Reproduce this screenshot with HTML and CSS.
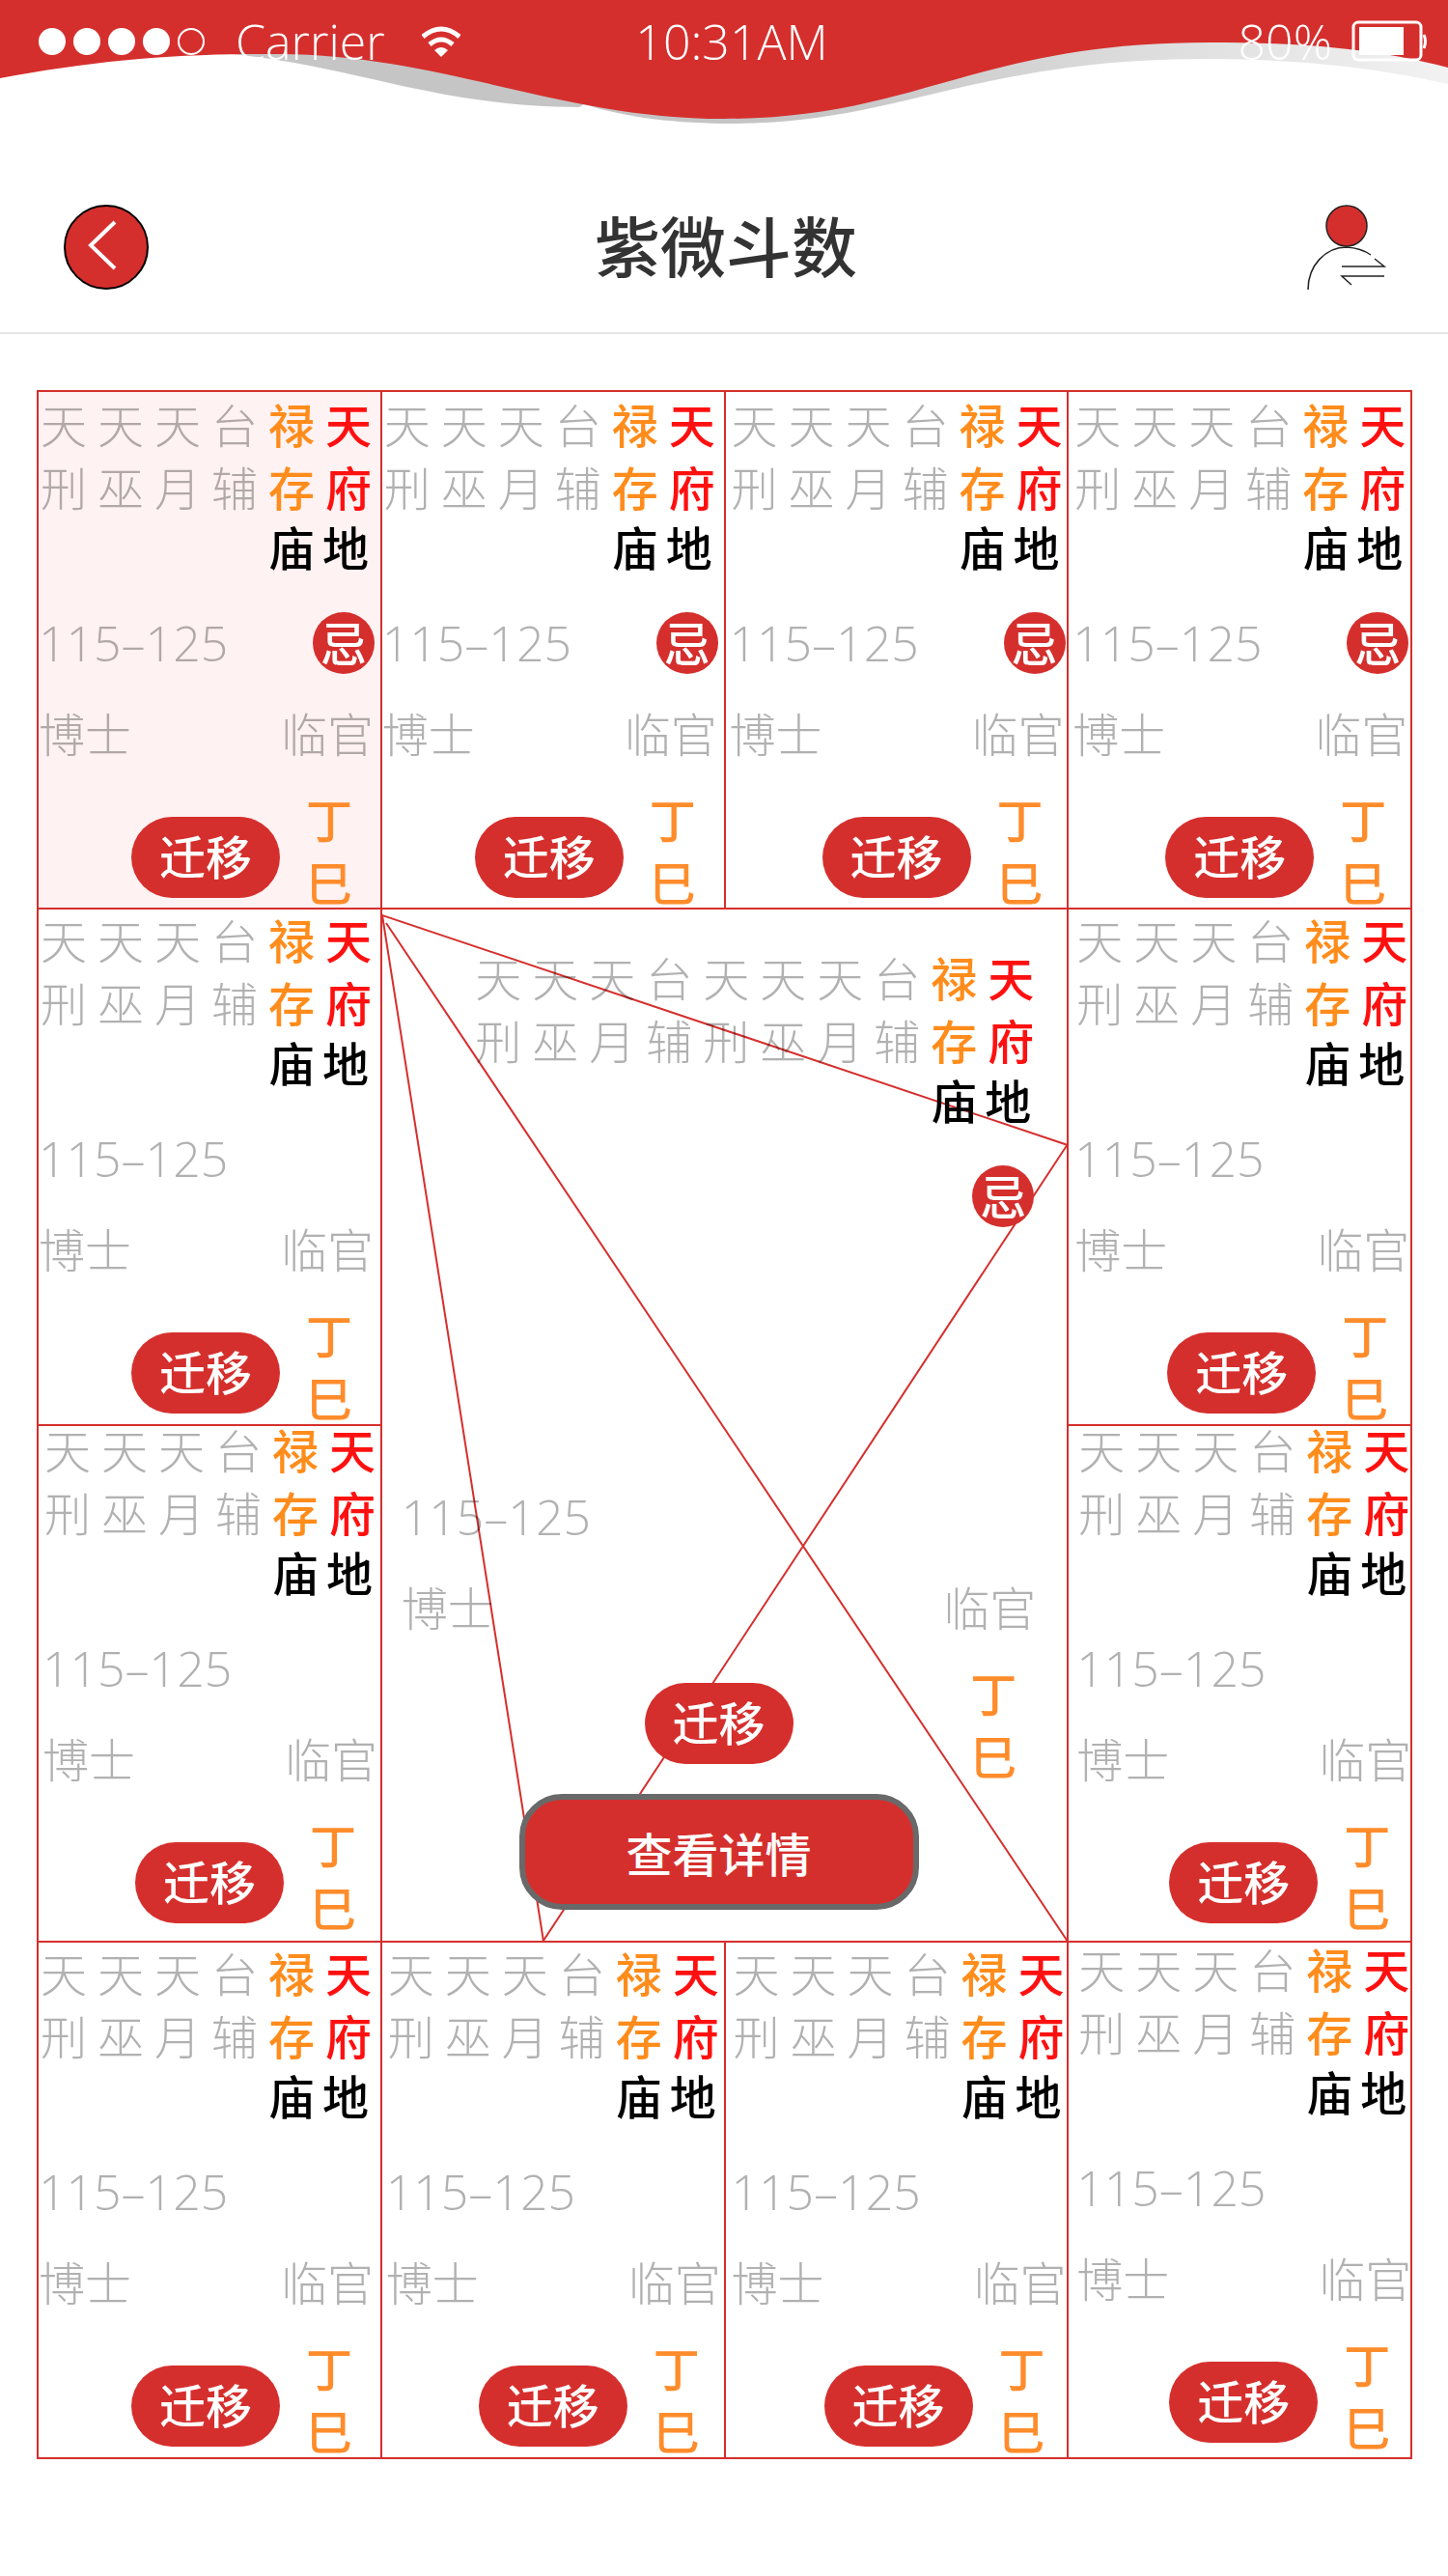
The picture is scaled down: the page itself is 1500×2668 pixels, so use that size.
FILE: index.html
```html
<!DOCTYPE html>
<html lang="zh-CN">
<head>
<meta charset="utf-8">
<meta name="viewport" content="width=device-width, initial-scale=1">
<title>紫微斗数</title>
<link rel="stylesheet" href="styles.css">
</head>
<body>
<div class="statusbar">
  <svg class="wave" viewBox="0 0 1500 132" preserveAspectRatio="none" aria-hidden="true">
    <defs>
      <linearGradient id="shade" x1="0" x2="1" y1="0" y2="0">
        <stop offset="0" stop-color="#c6c6c6"/>
        <stop offset=".5" stop-color="#c4c4c4"/>
        <stop offset="1" stop-color="#f2f2f2"/>
      </linearGradient>
    </defs>
    <path fill="url(#shade)" d="M150 52 C340 50 420 110 600 111 L605 108 C650 122 700 128 760 128 C930 128 1010 61 1250 61 C1350 61 1430 71 1500 87 V30 H150Z"/>
    <path fill="#d52f2d" d="M0 0 H1500 V70 C1430 52 1360 44 1252 44 C1010 44 950 123 750 123 C580 123 460 57 290 56 C190 55 100 62 0 81Z"/>
  </svg>
  <div class="status-left">
    <svg class="signal" viewBox="0 0 174 32" role="img" aria-label="信号">
      <g fill="#fff"><circle cx="16" cy="16" r="14"/><circle cx="52" cy="16" r="14"/><circle cx="88" cy="16" r="14"/><circle cx="124" cy="16" r="14"/></g>
      <circle cx="160" cy="16" r="13" fill="none" stroke="#fff" stroke-width="2"/>
    </svg>
    <span class="carrier">Carrier</span>
    <svg class="wifi" viewBox="0 0 40 32" role="img" aria-label="Wi-Fi">
      <g fill="none" stroke="#fff" stroke-width="5"><path d="M1 11 Q20 -5 39 11"/><path d="M8 19 Q20 9 32 19"/></g>
      <path fill="#fff" d="M13 25 Q20 19 27 25 L20 32Z"/>
    </svg>
  </div>
  <span class="time">10:31AM</span>
  <div class="status-right">
    <span>80%</span>
    <svg class="battery" viewBox="0 0 78 44" role="img" aria-label="电量">
      <rect x="2" y="2" width="70" height="39" rx="5" fill="none" stroke="#fff" stroke-width="3"/>
      <rect x="8" y="7" width="46" height="29" fill="#fff"/>
      <path d="M75 15 Q78 22 75 29" fill="none" stroke="#fff" stroke-width="3"/>
    </svg>
  </div>
</div>

<header class="navbar">
  <button class="icon-button" type="button" aria-label="返回">
    <svg viewBox="0 0 88 88"><circle cx="44" cy="44" r="43" fill="#d52f2d" stroke="#000" stroke-width="2"/><path d="M53 18 L28 42 L53 66" fill="none" stroke="#fff" stroke-width="4"/></svg>
  </button>
  <h1>紫微斗数</h1>
  <button class="icon-button" type="button" aria-label="切换用户">
    <svg viewBox="0 0 88 88"><g fill="none" stroke="#222" stroke-width="1.5"><circle cx="45" cy="22" r="21" fill="#d52f2d"/><path d="M5 88 C5 63 23 44 45 44 Q60 45 70 52"/><path d="M74 56 L84 64 H40"/><path d="M84 74 H40 L50 83"/></g></svg>
  </button>
</header>

<main class="board">
  <section class="palace top selected">
    <div class="stars"><span>天刑</span><span>天巫</span><span>天月</span><span>台辅</span><span class="orange">禄存</span><span class="red">天府</span></div>
    <div class="ranks"><span>庙</span><span>地</span></div>
    <div class="line ages"><span>115–125</span><b class="badge">忌</b></div>
    <div class="line"><span>博士</span><span>临官</span></div>
    <div class="foot"><button class="pill" type="button">迁移</button><span class="stem">丁巳</span></div>
  </section>
  <section class="palace top">
    <div class="stars"><span>天刑</span><span>天巫</span><span>天月</span><span>台辅</span><span class="orange">禄存</span><span class="red">天府</span></div>
    <div class="ranks"><span>庙</span><span>地</span></div>
    <div class="line ages"><span>115–125</span><b class="badge">忌</b></div>
    <div class="line"><span>博士</span><span>临官</span></div>
    <div class="foot"><button class="pill" type="button">迁移</button><span class="stem">丁巳</span></div>
  </section>
  <section class="palace top in-6">
    <div class="stars"><span>天刑</span><span>天巫</span><span>天月</span><span>台辅</span><span class="orange">禄存</span><span class="red">天府</span></div>
    <div class="ranks"><span>庙</span><span>地</span></div>
    <div class="line ages"><span>115–125</span><b class="badge">忌</b></div>
    <div class="line"><span>博士</span><span>临官</span></div>
    <div class="foot"><button class="pill" type="button">迁移</button><span class="stem">丁巳</span></div>
  </section>
  <section class="palace top in-6">
    <div class="stars"><span>天刑</span><span>天巫</span><span>天月</span><span>台辅</span><span class="orange">禄存</span><span class="red">天府</span></div>
    <div class="ranks"><span>庙</span><span>地</span></div>
    <div class="line ages"><span>115–125</span><b class="badge">忌</b></div>
    <div class="line"><span>博士</span><span>临官</span></div>
    <div class="foot"><button class="pill" type="button">迁移</button><span class="stem">丁巳</span></div>
  </section>

  <section class="palace">
    <div class="stars"><span>天刑</span><span>天巫</span><span>天月</span><span>台辅</span><span class="orange">禄存</span><span class="red">天府</span></div>
    <div class="ranks"><span>庙</span><span>地</span></div>
    <div class="line ages"><span>115–125</span></div>
    <div class="line"><span>博士</span><span>临官</span></div>
    <div class="foot"><button class="pill" type="button">迁移</button><span class="stem">丁巳</span></div>
  </section>
  <section class="center">
    <div class="stars"><span>天刑</span><span>天巫</span><span>天月</span><span>台辅</span><span>天刑</span><span>天巫</span><span>天月</span><span>台辅</span><span class="orange">禄存</span><span class="red">天府</span></div>
    <div class="ranks"><span>庙</span><span>地</span></div>
    <div class="line mark"><b class="badge">忌</b></div>
    <div class="line center-ages"><span>115–125</span></div>
    <div class="line"><span>博士</span><span>临官</span></div>
    <div class="foot"><button class="pill" type="button">迁移</button><span class="stem">丁巳</span></div>
    <button class="details" type="button">查看详情</button>
    <svg class="links" viewBox="0 0 710 1069" preserveAspectRatio="none" aria-hidden="true">
      <path d="M167 1069 L0 6 L710 244 L167 1069 M4 14 L710 1069"/>
    </svg>
  </section>
  <section class="palace in-8">
    <div class="stars"><span>天刑</span><span>天巫</span><span>天月</span><span>台辅</span><span class="orange">禄存</span><span class="red">天府</span></div>
    <div class="ranks"><span>庙</span><span>地</span></div>
    <div class="line ages"><span>115–125</span></div>
    <div class="line"><span>博士</span><span>临官</span></div>
    <div class="foot"><button class="pill" type="button">迁移</button><span class="stem">丁巳</span></div>
  </section>

  <section class="palace tight in-6">
    <div class="stars"><span>天刑</span><span>天巫</span><span>天月</span><span>台辅</span><span class="orange">禄存</span><span class="red">天府</span></div>
    <div class="ranks"><span>庙</span><span>地</span></div>
    <div class="line ages"><span>115–125</span></div>
    <div class="line"><span>博士</span><span>临官</span></div>
    <div class="foot"><button class="pill" type="button">迁移</button><span class="stem">丁巳</span></div>
  </section>
  <section class="palace tight in-10">
    <div class="stars"><span>天刑</span><span>天巫</span><span>天月</span><span>台辅</span><span class="orange">禄存</span><span class="red">天府</span></div>
    <div class="ranks"><span>庙</span><span>地</span></div>
    <div class="line ages"><span>115–125</span></div>
    <div class="line"><span>博士</span><span>临官</span></div>
    <div class="foot"><button class="pill" type="button">迁移</button><span class="stem">丁巳</span></div>
  </section>

  <section class="palace bottom">
    <div class="stars"><span>天刑</span><span>天巫</span><span>天月</span><span>台辅</span><span class="orange">禄存</span><span class="red">天府</span></div>
    <div class="ranks"><span>庙</span><span>地</span></div>
    <div class="line ages"><span>115–125</span></div>
    <div class="line"><span>博士</span><span>临官</span></div>
    <div class="foot"><button class="pill" type="button">迁移</button><span class="stem">丁巳</span></div>
  </section>
  <section class="palace bottom in-6">
    <div class="stars"><span>天刑</span><span>天巫</span><span>天月</span><span>台辅</span><span class="orange">禄存</span><span class="red">天府</span></div>
    <div class="ranks"><span>庙</span><span>地</span></div>
    <div class="line ages"><span>115–125</span></div>
    <div class="line"><span>博士</span><span>临官</span></div>
    <div class="foot"><button class="pill" type="button">迁移</button><span class="stem">丁巳</span></div>
  </section>
  <section class="palace bottom in-8">
    <div class="stars"><span>天刑</span><span>天巫</span><span>天月</span><span>台辅</span><span class="orange">禄存</span><span class="red">天府</span></div>
    <div class="ranks"><span>庙</span><span>地</span></div>
    <div class="line ages"><span>115–125</span></div>
    <div class="line"><span>博士</span><span>临官</span></div>
    <div class="foot"><button class="pill" type="button">迁移</button><span class="stem">丁巳</span></div>
  </section>
  <section class="palace corner in-10">
    <div class="stars"><span>天刑</span><span>天巫</span><span>天月</span><span>台辅</span><span class="orange">禄存</span><span class="red">天府</span></div>
    <div class="ranks"><span>庙</span><span>地</span></div>
    <div class="line ages"><span>115–125</span></div>
    <div class="line"><span>博士</span><span>临官</span></div>
    <div class="foot"><button class="pill" type="button">迁移</button><span class="stem">丁巳</span></div>
  </section>
</main>
</body>
</html>
```
FILE: styles.css
```css
:root {
  --red: #d52f2d;
  --muted: #b1b1b1;
  --orange: #ff8c1b;
}

* { box-sizing: border-box; }

body {
  margin: 0;
  padding-bottom: 119px;
  background: #fff;
  color: #000;
  font-family: "Noto Sans CJK SC", sans-serif;
  font-size: 48px;
}

button {
  margin: 0;
  padding: 0;
  border: 0;
  background: none;
  color: inherit;
  font: inherit;
  cursor: pointer;
}

svg { display: block; }

/* Status bar */
.statusbar {
  position: relative;
  display: grid;
  grid-template-columns: 1fr auto 1fr;
  height: 132px;
  padding: 10px 22px 0 38px;
  color: #fff;
  font-family: "Open Sans", "Noto Sans", sans-serif;
  font-size: 50px;
  font-weight: 300;
  line-height: 66px;
}

.wave {
  position: absolute;
  inset: 0;
  z-index: -1;
  width: 100%;
  height: 100%;
}

.status-left,
.status-right {
  display: flex;
  align-items: center;
  height: 66px;
}

.status-right {
  justify-content: flex-end;
  gap: 20px;
}

.signal { width: 174px; height: 32px; }
.carrier { margin: 0 38px 0 32px; }
.wifi { width: 40px; height: 32px; }
.battery { width: 78px; height: 44px; }

/* Title bar */
.navbar {
  display: flex;
  align-items: center;
  justify-content: space-between;
  height: 214px;
  padding: 36px 62px 0 66px;
  border-bottom: 2px solid #e5e5e5;
}

.navbar h1 {
  margin: 0;
  padding-bottom: 6px;
  color: #333;
  font-size: 68px;
  font-weight: 500;
  line-height: 88px;
}

.icon-button { width: 88px; height: 88px; }

/* Chart: twelve palaces round a two-by-two centre */
.board {
  display: grid;
  grid-template-columns: repeat(4, 1fr);
  grid-auto-rows: minmax(535px, auto);
  margin: 58px 37px 0 38px;
  border: solid var(--red);
  border-width: 0 2px 2px 0;
}

.palace,
.center {
  min-width: 0;
  border: solid var(--red);
  border-width: 2px 0 0 2px;
}

.palace { padding: 10px 0 0 2px; }
.top { min-height: 536px; padding-top: 12px; }
.tight { padding-top: 3px; }
.corner { padding-top: 6px; }
.in-6 { padding-left: 6px; }
.in-8 { padding-left: 8px; }
.in-10 { padding-left: 10px; }

.selected {
  --muted: #b1a9a8;
  background: #fff2f3;
}

.stars {
  display: flex;
  gap: 11px;
  margin-top: -12px;
  color: var(--muted);
  font-weight: 300;
  line-height: 65px;
}

.stars span { flex: none; width: 48px; }

.stars .orange { color: var(--orange); font-weight: 500; }
.stars .red { color: #ff1010; font-weight: 500; }

.ranks {
  display: flex;
  gap: 8px;
  padding-left: 236px;
  font-weight: 500;
  line-height: 58px;
}

.line {
  display: flex;
  justify-content: space-between;
  width: 347px;
  height: 64px;
  margin: 28px 0 0 -2px;
  color: var(--muted);
  font-weight: 300;
  line-height: 64px;
}

.ages {
  width: 348px;
  margin-top: 40px;
}

.ages,
.center-ages {
  font-family: "Open Sans", "Noto Sans CJK SC", sans-serif;
  font-size: 50px;
}

.badge {
  width: 64px;
  height: 64px;
  border-radius: 50%;
  background: var(--red);
  color: #fff;
  font-family: "Noto Sans CJK SC", sans-serif;
  font-size: 48px;
  font-weight: 500;
  line-height: 60px;
  text-align: center;
}

.foot {
  display: flex;
  gap: 27px;
  margin: 25px 0 -32px 94px;
}

.pill {
  width: 154px;
  height: 84px;
  margin-top: 31px;
  padding-bottom: 6px;
  border-radius: 42px;
  background: var(--red);
  color: #fff;
  font-weight: 500;
  line-height: 78px;
}

.stem {
  width: 48px;
  color: #ff8c2b;
  font-weight: 500;
  line-height: 65px;
}

/* Centre panel */
.center {
  position: relative;
  display: flex;
  flex-direction: column;
  grid-column: 2 / 4;
  grid-row: 2 / 4;
  padding: 49px 34px 0 22px;
}

.center .stars { justify-content: flex-end; }
.center .ranks { align-self: flex-end; width: 107px; padding-left: 0; }
.center .line { width: auto; margin-right: -2px; }
.center .mark { justify-content: flex-end; margin: 40px 0 0; }
.center .center-ages { margin-top: 268px; }

.center .foot {
  display: grid;
  grid-template-columns: 1fr auto 1fr;
  gap: 0;
  margin: 25px 0 0;
}

.center .pill { grid-column: 2; margin-top: 23px; }
.center .stem { justify-self: end; margin-right: 18px; }

.details {
  align-self: center;
  width: 414px;
  height: 120px;
  margin-top: 8px;
  border: 6px solid #696969;
  border-radius: 44px;
  background: var(--red);
  color: #fff;
  font-weight: 500;
  line-height: 106px;
}

.center .pill,
.center .badge,
.details {
  position: relative;
  z-index: 1;
}

.links {
  position: absolute;
  inset: 0;
  width: 100%;
  height: 100%;
  fill: none;
  stroke: var(--red);
  stroke-width: 2;
  mix-blend-mode: multiply;
  pointer-events: none;
}
```
